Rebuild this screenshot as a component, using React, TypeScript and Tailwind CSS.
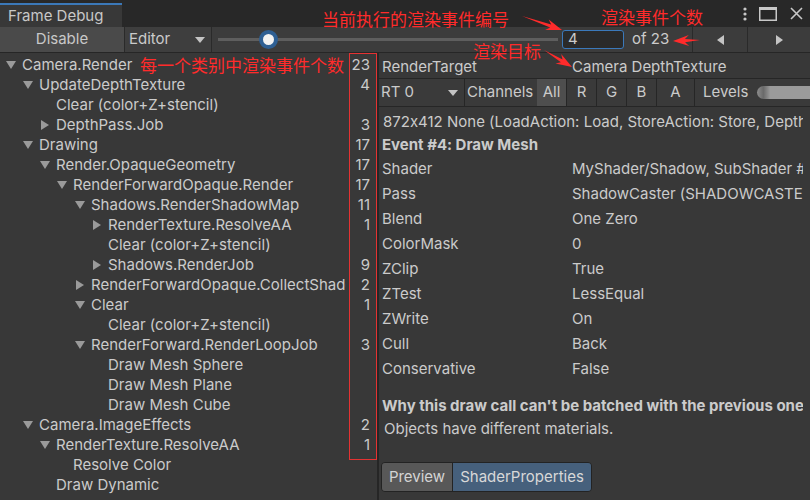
import React from 'react';

type Row = { l: number; a?: 'down' | 'right'; t: string; c?: string };

const rows: Row[] = [
    { l: 0, a: 'down', t: 'Camera.Render', c: '23' },
    { l: 1, a: 'down', t: 'UpdateDepthTexture', c: '4' },
    { l: 2, t: 'Clear (color+Z+stencil)' },
    { l: 2, a: 'right', t: 'DepthPass.Job', c: '3' },
    { l: 1, a: 'down', t: 'Drawing', c: '17' },
    { l: 2, a: 'down', t: 'Render.OpaqueGeometry', c: '17' },
    { l: 3, a: 'down', t: 'RenderForwardOpaque.Render', c: '17' },
    { l: 4, a: 'down', t: 'Shadows.RenderShadowMap', c: '11' },
    { l: 5, a: 'right', t: 'RenderTexture.ResolveAA', c: '1' },
    { l: 5, t: 'Clear (color+Z+stencil)' },
    { l: 5, a: 'right', t: 'Shadows.RenderJob', c: '9' },
    { l: 4, a: 'right', t: 'RenderForwardOpaque.CollectShadows', c: '2' },
    { l: 4, a: 'down', t: 'Clear', c: '1' },
    { l: 5, t: 'Clear (color+Z+stencil)' },
    { l: 4, a: 'down', t: 'RenderForward.RenderLoopJob', c: '3' },
    { l: 5, t: 'Draw Mesh Sphere' },
    { l: 5, t: 'Draw Mesh Plane' },
    { l: 5, t: 'Draw Mesh Cube' },
    { l: 1, a: 'down', t: 'Camera.ImageEffects', c: '2' },
    { l: 2, a: 'down', t: 'RenderTexture.ResolveAA', c: '1' },
    { l: 3, t: 'Resolve Color' },
    { l: 2, t: 'Draw Dynamic' },
];

// indentation per depth (text starts 16px after this)
const indent = ['pl-[6px]', 'pl-[23px]', 'pl-[40px]', 'pl-[57px]', 'pl-[75px]', 'pl-[92px]'];

const props: [string, string][] = [
    ['Shader', 'MyShader/Shadow, SubShader #0'],
    ['Pass', 'ShadowCaster (SHADOWCASTER)'],
    ['Blend', 'One Zero'],
    ['ColorMask', '0'],
    ['ZClip', 'True'],
    ['ZTest', 'LessEqual'],
    ['ZWrite', 'On'],
    ['Cull', 'Back'],
    ['Conservative', 'False'],
];

function Fold({ dir }: { dir?: 'down' | 'right' }) {
    return (
        <span className="w-4 shrink-0 flex items-center">
            {dir === 'down' && (
                <svg width="10" height="8" viewBox="0 0 10 8"><path d="M0 0 L10 0 L5 8 Z" fill="#9a9a9a" /></svg>
            )}
            {dir === 'right' && (
                <svg width="8" height="10" viewBox="0 0 8 10" className="ml-[1px]"><path d="M0 0 L8 5 L0 10 Z" fill="#9a9a9a" /></svg>
            )}
        </span>
    );
}

function Arrow({ x1, y1, x2, y2 }: { x1: number; y1: number; x2: number; y2: number }) {
    const dx = x2 - x1, dy = y2 - y1;
    const len = Math.hypot(dx, dy);
    const ux = dx / len, uy = dy / len, nx = -uy, ny = ux;
    const hl = 12;
    const bx = x2 - ux * hl, by = y2 - uy * hl;
    const wx = x2 - ux * (hl + 4), wy = y2 - uy * (hl + 4);
    const pts = [
        [x1, y1],
        [bx + nx * 1.6, by + ny * 1.6],
        [wx + nx * 5.5, wy + ny * 5.5],
        [x2, y2],
        [wx - nx * 5.5, wy - ny * 5.5],
        [bx - nx * 1.6, by - ny * 1.6],
    ].map(p => p.join(',')).join(' ');
    return <polygon points={pts} fill="#ff2b2b" />;
}

export default function App() {
    return (
        <div className="relative w-[810px] h-[500px] overflow-hidden bg-[#383838] text-[#cbcbcb] text-[15px] font-[Inter,'Noto_Sans_CJK_SC',sans-serif] [font-feature-settings:'calt'_0]">
            {/* window tab bar */}
            <div className="h-[27px] bg-[#282828] flex items-end">
                <div className="h-[24px] w-[122px] bg-[#383838] border-t-2 border-[#3b78b8] pl-[8px] flex items-center text-[#c8c8c8]">
                    Frame Debug
                </div>
                <div className="flex-1" />
                <div className="h-[27px] flex items-center gap-[8px] pr-[7px] text-[#c8c8c8]">
                    <svg width="4" height="14" viewBox="0 0 4 14"><circle cx="2" cy="2" r="1.6" fill="#c8c8c8" /><circle cx="2" cy="7" r="1.6" fill="#c8c8c8" /><circle cx="2" cy="12" r="1.6" fill="#c8c8c8" /></svg>
                    <svg width="18" height="14" viewBox="0 0 18 14" className="ml-[4px]"><rect x="0.75" y="0.75" width="16.5" height="12.5" fill="none" stroke="#c8c8c8" strokeWidth="1.5" /><rect x="0" y="0" width="18" height="3" fill="#c8c8c8" /></svg>
                    <svg width="13" height="13" viewBox="0 0 13 13" className="ml-[5px]"><path d="M1 1 L12 12 M12 1 L1 12" stroke="#c8c8c8" strokeWidth="1.6" /></svg>
                </div>
            </div>

            {/* toolbar */}
            <div className="h-[26px] flex bg-[#3c3c3c] border-b border-[#262626]">
                <div className="w-[125px] bg-[#4a4a4a] border-r border-[#2a2a2a] flex items-center justify-center text-[#c8c8c8]">Disable</div>
                <div className="w-[87px] bg-[#3e3e3e] border-r border-[#2a2a2a] flex items-center justify-between pl-[4px] pr-[6px]">
                    <span>Editor</span>
                    <svg width="10" height="6" viewBox="0 0 10 6"><path d="M0 0 L10 0 L5 6 Z" fill="#c4c4c4" /></svg>
                </div>
                <div className="w-[350px] flex items-center pl-[6px] pr-[4px]">
                    <div className="relative w-full h-[3px] bg-[#5e5e5e]">
                        <div className="absolute left-[41px] top-[-8px] w-[19px] h-[19px] rounded-full bg-[#f2f2f2] border-[4px] border-[#2e5f93]" />
                    </div>
                </div>
                <div className="flex items-center">
                    <div className="w-[62px] h-[19px] border border-[#3b79bb] rounded-[3px] bg-[#2a2a2a] pl-[5px] flex items-center">4</div>
                    <span className="ml-[8px] w-[60px]">of 23</span>
                </div>
                <div className="w-[55px] border-l border-[#2a2a2a] flex items-center justify-center">
                    <svg width="7" height="10" viewBox="0 0 7 10"><path d="M7 0 L0 5 L7 10 Z" fill="#c4c4c4" /></svg>
                </div>
                <div className="flex-1 border-l border-[#2a2a2a] flex items-center justify-center">
                    <svg width="7" height="10" viewBox="0 0 7 10"><path d="M0 0 L7 5 L0 10 Z" fill="#c4c4c4" /></svg>
                </div>
            </div>

            {/* body */}
            <div className="flex h-[447px]">
                {/* event tree */}
                <div className="w-[379px] shrink-0 pt-[2px] border-r-2 border-[#262626]">
                    {rows.map((r, i) => (
                        <div key={i} className="flex h-[20px] items-center leading-[20px]">
                            <div className={`w-[346px] flex items-center overflow-hidden whitespace-nowrap ${indent[r.l]}`}>
                                <Fold dir={r.a} />
                                <span>{r.t}</span>
                            </div>
                            <div className="flex-1 text-right pr-[7px]">{r.c}</div>
                        </div>
                    ))}
                </div>

                {/* details */}
                <div className="flex-1 overflow-hidden">
                    <div className="h-[26px] flex items-center pt-[3px] border-b border-[#262626] whitespace-nowrap">
                        <span className="w-[193px] pl-[3px]">RenderTarget</span>
                        <span>Camera DepthTexture</span>
                    </div>
                    <div className="h-[28px] flex items-stretch bg-[#3a3a3a] border-b border-[#262626] whitespace-nowrap">
                        <div className="w-[86px] border-r border-[#262626] flex items-center justify-between pl-[2px] pr-[6px]">
                            <span>RT 0</span>
                            <svg width="10" height="6" viewBox="0 0 10 6"><path d="M0 0 L10 0 L5 6 Z" fill="#c4c4c4" /></svg>
                        </div>
                        <div className="w-[72px] flex items-center pl-[2px]">Channels</div>
                        <div className="w-[30px] bg-[#4e4e4e] border-r border-[#262626] flex items-center justify-center">All</div>
                        <div className="w-[30px] border-r border-[#262626] flex items-center justify-center">R</div>
                        <div className="w-[30px] border-r border-[#262626] flex items-center justify-center">G</div>
                        <div className="w-[30px] border-r border-[#262626] flex items-center justify-center">B</div>
                        <div className="w-[38px] border-r border-[#262626] flex items-center justify-center">A</div>
                        <div className="flex-1 flex items-center pl-[8px] gap-[9px]">
                            <span>Levels</span>
                            <div className="flex-1 h-[13px] rounded-l-full bg-gradient-to-r from-[#8d8d8d] via-[#6a6a6a] via-[12%] to-[#9b9b9b] to-[25%]" />
                        </div>
                    </div>

                    <div className="pr-[7px] whitespace-nowrap overflow-hidden">
                        <div className="h-[24px] mt-[3px] flex items-center pl-[4px] overflow-hidden">
                            872x412 None (LoadAction: Load, StoreAction: Store, Depth: 24)
                        </div>
                        <div className="h-[23px] flex items-center pl-[3px] font-bold">Event #4: Draw Mesh</div>
                        {props.map(([k, v]) => (
                            <div key={k} className="h-[25px] flex items-center pl-[3px] overflow-hidden">
                                <span className="w-[190px] shrink-0">{k}</span>
                                <span>{v}</span>
                            </div>
                        ))}
                        <div className="h-[24px] mt-[12px] flex items-center pl-[3px] font-bold overflow-hidden">
                            Why this draw call can't be batched with the previous one
                        </div>
                        <div className="h-[22px] flex items-center pl-[5px]">Objects have different materials.</div>
                        <div className="mt-[22px] ml-[2px] flex h-[30px] w-fit rounded-[4px] border border-[#232323] overflow-hidden">
                            <div className="w-[70px] bg-[#585858] flex items-center justify-center text-[#d4d4d4]">Preview</div>
                            <div className="w-[139px] bg-[#46607c] border-l border-[#232323] flex items-center justify-center text-[#d8d8d8]">ShaderProperties</div>
                        </div>
                    </div>
                </div>
            </div>

            {/* annotations */}
            <div className="absolute left-[349px] top-[53px] w-[28px] h-[407px] border border-[#e53232] pointer-events-none" />
            <svg className="absolute left-0 top-0 pointer-events-none" width="810" height="500">
                <Arrow x1={522} y1={16} x2={562} y2={30} />
                <Arrow x1={700} y1={40} x2={673} y2={41} />
                <Arrow x1={544} y1={50} x2={572} y2={67} />
            </svg>
            <div className="absolute left-[322px] top-[9px] text-[17px] leading-[22px] text-[#ff2b2b] whitespace-nowrap">当前执行的渲染事件编号</div>
            <div className="absolute left-[601px] top-[7px] text-[17px] leading-[22px] text-[#ff2b2b] whitespace-nowrap">渲染事件个数</div>
            <div className="absolute left-[473px] top-[41px] text-[17px] leading-[22px] text-[#ff2b2b] whitespace-nowrap">渲染目标</div>
            <div className="absolute left-[140px] top-[55px] text-[17px] leading-[22px] text-[#ff2b2b] whitespace-nowrap">每一个类别中渲染事件个数</div>
        </div>
    );
}
